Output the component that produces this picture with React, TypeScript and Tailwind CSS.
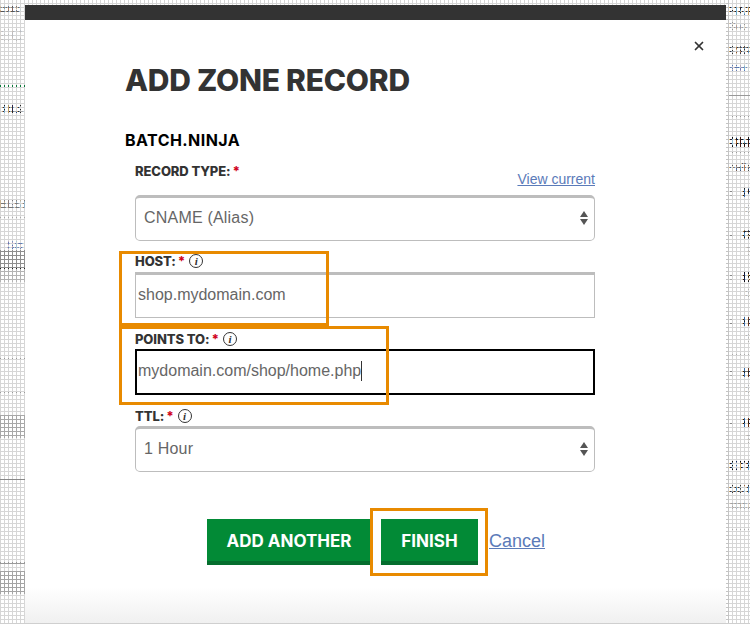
import { X } from 'lucide-react';

const sans = "font-['Inter','Noto_Sans',sans-serif]";
const arial = "font-['Liberation_Sans',Arial,sans-serif]";

const leftRows = [
  { h: 5, c: '' },
  { h: 8, c: 'text-[9px] leading-[8px] font-bold text-[#555]', t: '2013' },
  { h: 14, c: '' },
  { h: 18, c: 'text-[16px] leading-[18px] text-[#bbb]', t: 'EC' },
  { h: 40, c: '' },
  { h: 2, c: 'bg-[#0a7a3a]' },
  { h: 18, c: '' },
  { h: 10, c: 'text-[10px] leading-[10px] font-bold text-[#222] pl-[2px]', t: 'FILE' },
  { h: 85, c: '' },
  { h: 10, c: 'text-[10px] leading-[10px] font-bold text-[#777]', t: 'BEST' },
  { h: 7, c: '' },
  { h: 1, c: 'bg-[#aaa]' },
  { h: 22, c: '' },
  { h: 10, c: 'text-[11px] leading-[10px] text-[#46a] pl-[7px] underline', t: 'Sig' },
  { h: 18, c: 'bg-[#8e8e8e]' },
  { h: 1, c: 'bg-[#222]' },
  { h: 13, c: 'bg-[#b4b4b4]' },
  { h: 76, c: '' },
  { h: 1, c: 'bg-[#999]' },
  { h: 33, c: '' },
  { h: 1, c: 'bg-[#999]' },
  { h: 22, c: '' },
  { h: 23, c: 'bg-[#a8a8a8]' },
  { h: 41, c: '' },
  { h: 1, c: 'bg-[#888]' },
  { h: 82, c: '' },
  { h: 2, c: 'bg-[#999]' },
  { h: 7, c: '' },
  { h: 23, c: 'bg-[#a4a4a4]' },
];

const rightRows = [
  { h: 6, c: '' },
  { h: 11, c: 'text-[11px] leading-[11px] font-bold text-[#222]', t: 'HAIL' },
  { h: 5, c: '' },
  { h: 10, c: 'text-[10px] leading-[10px] text-[#888]', t: 'Boo T' },
  { h: 14, c: '' },
  { h: 10, c: 'text-[10px] leading-[10px] font-bold text-[#333]', t: 'ESSE' },
  { h: 7, c: '' },
  { h: 10, c: 'text-[10px] leading-[10px] text-[#46a]', t: 'seat' },
  { h: 22, c: '' },
  { h: 1, c: 'bg-[#999]' },
  { h: 20, c: '' },
  { h: 1, c: 'bg-[#999]' },
  { h: 18, c: '' },
  { h: 14, c: 'text-[14px] leading-[14px] font-bold text-[#111]', t: 'DMA' },
  { h: 3, c: '' },
  { h: 1, c: 'bg-[#999]' },
  { h: 9, c: '' },
  { h: 11, c: 'text-[11px] leading-[11px] text-[#333]', t: 'nalize' },
  { h: 14, c: '' },
  { h: 12, c: 'text-[12px] leading-[12px] font-bold text-[#222]', t: 'P', i: true },
  { h: 6, c: '' },
  { h: 10, c: 'text-[10px] leading-[10px] text-[#aaa] pl-[16px]', t: 'S' },
  { h: 14, c: '' },
  { h: 12, c: 'text-[12px] leading-[12px] font-bold text-[#222]', t: 'G', i: true },
  { h: 6, c: '' },
  { h: 10, c: 'text-[10px] leading-[10px] text-[#aaa] pl-[16px]', t: 'S' },
  { h: 13, c: '' },
  { h: 14, c: 'text-[14px] leading-[14px] font-bold text-[#111]', t: 'B', i: true },
  { h: 5, c: '' },
  { h: 10, c: 'text-[10px] leading-[10px] text-[#aaa] pl-[16px]', t: 'S' },
  { h: 17, c: '' },
  { h: 12, c: 'text-[12px] leading-[12px] font-bold text-[#222]', t: 'H', i: true },
  { h: 6, c: '' },
  { h: 10, c: 'text-[10px] leading-[10px] text-[#aaa] pl-[16px]', t: 'S' },
  { h: 10, c: '' },
  { h: 1, c: 'bg-[#aaa]' },
  { h: 12, c: '' },
  { h: 12, c: 'text-[12px] leading-[12px] font-bold text-[#222]', t: 'H', i: true },
  { h: 6, c: '' },
  { h: 10, c: 'text-[10px] leading-[10px] text-[#aaa] pl-[16px]', t: 'S' },
  { h: 22, c: '' },
  { h: 12, c: 'text-[12px] leading-[12px] font-bold text-[#111]', t: 'H', i: true },
  { h: 6, c: '' },
  { h: 10, c: 'text-[10px] leading-[10px] text-[#aaa] pl-[16px]', t: 'S' },
  { h: 14, c: '' },
  { h: 13, c: 'text-[13px] leading-[13px] font-bold text-[#111]', t: 'ETR' },
  { h: 12, c: '' },
  { h: 11, c: 'text-[11px] leading-[11px] font-bold text-[#333]', t: 'DSTC' },
  { h: 6, c: '' },
  { h: 10, c: 'text-[10px] leading-[10px] text-[#999]', t: 'status' },
  { h: 18, c: '' },
  { h: 1, c: 'bg-[#aaa]' },
];

function BackdropColumn({ rows, className }: { rows: { h: number; c: string; t?: string; i?: boolean }[]; className: string }) {
  return (
    <div className={`flex flex-col overflow-hidden ${arial} ${className}`}>
      {rows.map((row, i) => (
        <div key={i} className={`flex shrink-0 items-center whitespace-nowrap ${row.c}`} style={{ height: row.h }}>
          {row.i && <span className="ml-[1px] mr-[10px] h-[6px] w-[6px] rounded-full border border-[#888]" />}
          {row.t}
        </div>
      ))}
    </div>
  );
}

function Info() {
  return (
    <span className="ml-[4px] mt-[1px] inline-flex h-[14px] w-[14px] shrink-0 items-center justify-center rounded-full border-[1.5px] border-[#333] font-['Liberation_Serif',serif] text-[11px] font-bold italic leading-none tracking-normal text-[#333]">
      i
    </span>
  );
}

function Label({ text, info, className }: { text: string; info?: boolean; className?: string }) {
  return (
    <div className={`flex items-center text-[13px] font-extrabold leading-[14px] tracking-[-0.1px] text-[#333] ${sans} ${className ?? ''}`}>
      <span>{text}</span>
      <span className="ml-[2px] text-[#d0021b]">*</span>
      {info && <Info />}
    </div>
  );
}

function Arrows() {
  return (
    <svg className="absolute right-[7px] top-[16px]" width="8" height="14" viewBox="0 0 8 14" fill="#555">
      <path d="M4 0 8 6H0z" />
      <path d="M0 8h8l-4 6z" />
    </svg>
  );
}

function SelectBox({ value }: { value: string }) {
  return (
    <div className="relative">
      <select
        value={value}
        disabled
        className={`h-[46px] w-full appearance-none rounded-[5px] border border-t-[3px] border-[#bdbdbd] bg-white pb-[2px] pl-[8px] text-[16px] tracking-[0.2px] text-[#666] opacity-100 ${arial}`}
      >
        <option>{value}</option>
      </select>
      <Arrows />
    </div>
  );
}

export default function App() {
  return (
    <div className="relative box-content h-[623px] w-[750px] overflow-hidden border-b border-[#cfcfcf] bg-[#d6d6d6]">
      {/* dimmed page behind the dialog */}
      <div className="flex h-full">
        <BackdropColumn rows={leftRows} className="w-[25px]" />
        <div className="flex-1" />
        <BackdropColumn rows={rightRows} className="w-[24px] border-l-[3px] border-[#c4c4c4]" />
      </div>
      <div className="absolute inset-0 bg-[conic-gradient(at_25%_75%,#fff_25%,transparent_0)] bg-[size:4px_4px]" />

      {/* dialog */}
      <div className="absolute bottom-0 left-[25px] top-[5px] flex w-[701px] flex-col">
        <div className="h-[15px] shrink-0 bg-[#333]" />
        <div className="relative flex-1 bg-[linear-gradient(#fff_0,#fff_94%,#f0f0f0_100%)] pl-[100px] pr-[131px]">
          <button className="absolute right-[20px] top-[19px] text-[#333]">
            <X size={14} strokeWidth={3} />
          </button>

          <h1 className={`mt-[44px] text-[30px] font-extrabold leading-[32px] tracking-[-0.25px] text-[#333] ${sans}`}>
            ADD ZONE RECORD
          </h1>

          <h2 className={`mt-[34px] text-[16px] font-bold leading-[20px] tracking-[0.45px] text-black ${sans}`}>BATCH.NINJA</h2>

          <div className="pl-[10px]">
            <div className="mt-[11px] flex items-start justify-between">
              <Label text="RECORD TYPE:" className="mt-[3px]" />
              <a className={`mt-[10px] text-[14px] leading-[16px] text-[#5b7bb9] underline ${arial}`}>View current</a>
            </div>
            <div className="mt-[8px]">
              <SelectBox value="CNAME (Alias)" />
            </div>

            <Label text="HOST:" info className="mt-[12px]" />
            <input
              readOnly
              value="shop.mydomain.com"
              className={`mt-[4px] block h-[46px] w-full border border-t-[3px] border-[#bdbdbd] pb-[2px] pl-[2px] text-[16px] text-[#666] ${arial}`}
            />

            <Label text="POINTS TO:" info className="mt-[13px]" />
            <div className="relative mt-[3px]">
              <input
                readOnly
                value="mydomain.com/shop/home.php"
                className={`block h-[46px] w-full border-2 border-black pb-[2px] pl-[1px] text-[16px] text-[#666] outline-none ${arial}`}
              />
              <span className="absolute left-[226px] top-[12px] h-[20px] w-px bg-[#333]" />
            </div>

            <Label text="TTL:" info className="mt-[13px]" />
            <div className="mt-[3px]">
              <SelectBox value="1 Hour" />
            </div>

            <div className="mt-[47px] flex items-start pl-[72px]">
              <button className={`h-[46px] w-[164px] border-b-4 border-[#056e2e] bg-[#028a36] pt-[3px] text-[17px] font-bold text-white ${sans}`}>
                ADD ANOTHER
              </button>
              <button className={`ml-[10px] h-[46px] w-[97px] border-b-4 border-[#056e2e] bg-[#028a36] pt-[3px] text-[17px] font-bold text-white ${sans}`}>
                FINISH
              </button>
              <a className={`ml-[11px] mt-[12px] text-[18px] leading-[20px] text-[#5b7bb9] underline ${arial}`}>Cancel</a>
            </div>
          </div>

          {/* annotation boxes drawn over the form */}
          <div className="pointer-events-none absolute left-[94px] top-[231px] h-[75px] w-[210px] border-[3px] border-[#e88a00]" />
          <div className="pointer-events-none absolute left-[94px] top-[306px] h-[79px] w-[270px] border-[3px] border-[#e88a00]" />
          <div className="pointer-events-none absolute left-[345px] top-[488px] h-[68px] w-[118px] border-[3px] border-[#e88a00]" />
        </div>
      </div>
    </div>
  );
}
